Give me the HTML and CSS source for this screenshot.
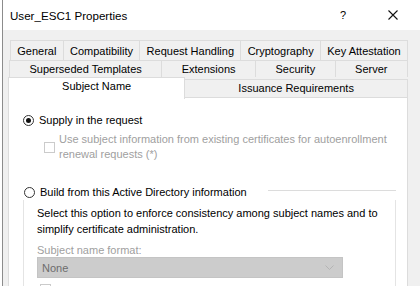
FILE: index.html
```html
<!DOCTYPE html>
<html lang="en">
<head>
    <meta charset="UTF-8">
    <meta name="viewport" content="width=device-width, initial-scale=1.0">
    <title>User_ESC1 Properties</title>
    <link rel="stylesheet" href="styles.css">
</head>
<body>

    <div class="window">
        <div class="titlebar">
            <span class="title">User_ESC1 Properties</span>
            <span class="help">?</span>
            <span class="close">
                <svg width="10" height="10" viewBox="0 0 10 10">
                    <path d="M0.5 0.5 L9.5 9.5 M9.5 0.5 L0.5 9.5" stroke="#111" stroke-width="1.1" fill="none"/>
                </svg>
            </span>
        </div>

        <div class="dialog">
            <!-- tab rows, back to front -->
            <div class="tabs">
                <div class="tab-row row1">
                    <div class="tab">General</div>
                    <div class="tab">Compatibility</div>
                    <div class="tab">Request Handling</div>
                    <div class="tab">Cryptography</div>
                    <div class="tab">Key Attestation</div>
                </div>
                <div class="tab-row row2">
                    <div class="tab">Superseded Templates</div>
                    <div class="tab">Extensions</div>
                    <div class="tab">Security</div>
                    <div class="tab">Server</div>
                </div>
                <div class="tab-row row3">
                    <div class="tab active">Subject Name</div>
                    <div class="tab">Issuance Requirements</div>
                </div>
            </div>

            <div class="panel">
                <div class="option">
                    <span class="radio checked"></span>
                    <span>Supply in the request</span>
                </div>

                <div class="check-line disabled">
                    <span class="checkbox"></span>
                    <span>Use subject information from existing certificates for autoenrollment<br>renewal requests (*)</span>
                </div>

                <div class="group">
                    <div class="group-head">
                        <span class="radio"></span>
                        <span>Build from this Active Directory information</span>
                        <span class="group-rule"></span>
                    </div>
                    <div class="group-body">
                        <p class="note">Select this option to enforce consistency among subject names and to<br>simplify certificate administration.</p>
                        <div class="field-label">Subject name format:</div>
                        <div class="select">
                            <span>None</span>
                            <svg width="9" height="5" viewBox="0 0 9 5">
                                <path d="M0.5 0.5 L4.5 4.5 L8.5 0.5" stroke="#b4b4b4" fill="none"/>
                            </svg>
                        </div>
                        <!-- next option row, only its box shows at the edge -->
                        <span class="checkbox next"></span>
                    </div>
                </div>
            </div>
        </div>
    </div>

</body>
</html>
```

FILE: styles.css
```css
body {
    margin: 0;
    width: 420px;
    height: 286px;
    overflow: hidden;
    background: #fff;
    font-family: "Liberation Sans", Arial, sans-serif;
    font-size: 11px;
    color: #000;
}
.window {
    margin-left: 2px;
    border-left: 1px solid #8c8c8c;
    height: 286px;
}
.titlebar {
    height: 30px;
    display: flex;
    align-items: center;
    background: #fff;
}
.title {
    margin-left: 7px;
    font-size: 11.6px;
    flex: 1;
}
.help {
    font-size: 11px;
    width: 10px;
    margin-right: 38px;
}
.close {
    display: flex;
    margin-right: 22px;
}
.dialog {
    background: #f0f0f0;
    height: 256px;
    padding: 10px 12px 0 5px;
}
.tab-row {
    display: flex;
}
.tab {
    flex: 1 1 auto;
    padding: 0 5px;
    text-align: center;
    border: 1px solid #dcdcdc;
    border-bottom: none;
    margin-left: -1px;
    background: #f0f0f0;
    white-space: nowrap;
}
.tab:first-child {
    margin-left: 0;
}
.row1 {
    margin-left: 2px;
    height: 20px;
    line-height: 20px;
}
.row2 {
    margin-left: 1px;
    height: 17px;
    line-height: 16px;
}
.row3 {
    height: 20px;
    position: relative;
    z-index: 1;
}
.row3 .tab {
    margin-top: 2px;
    line-height: 17px;
}
.row3 .tab.active {
    margin-top: 0;
    height: 21px;
    line-height: 17px;
    background: #fff;
}
.panel {
    background: #fff;
    border: 1px solid #dcdcdc;
    height: 200px;
    padding: 14px 0 0 14px;
}
.option {
    display: flex;
    align-items: center;
    gap: 5px;
    height: 16px;
}
.radio {
    width: 9px;
    height: 9px;
    border: 1px solid #333;
    border-radius: 50%;
    background: #fff;
    display: flex;
    align-items: center;
    justify-content: center;
    flex: none;
}
.radio.checked::after {
    content: "";
    width: 5px;
    height: 5px;
    border-radius: 50%;
    background: #111;
}
.check-line {
    display: flex;
    align-items: center;
    gap: 4px;
    margin: 4px 0 0 21px;
    line-height: 15px;
}
.checkbox {
    width: 9px;
    height: 9px;
    border: 1px solid #cbcbcb;
    background: #fff;
    flex: none;
}
.disabled {
    color: #a0a0a0;
}
.group {
    margin-top: 22px;
    width: 373px;
}
.group-head {
    display: flex;
    align-items: center;
    gap: 5px;
    height: 16px;
    padding-left: 1px;
}
.group-rule {
    flex: 1;
    border-top: 1px solid #dcdcdc;
    margin: -3px 0 0 16px;
}
.group-body {
    border-left: 1px solid #e4e4e4;
    border-right: 1px solid #e4e4e4;
    padding: 5px 0 10px 13px;
    height: 100px;
}
.note {
    margin: 0;
    line-height: 16px;
}
.field-label {
    color: #a0a0a0;
    margin-top: 6px;
    line-height: 14px;
}
.select {
    width: 292px;
    height: 19px;
    background: #cccccc;
    border: 1px solid #c4c4c4;
    display: flex;
    align-items: center;
    justify-content: space-between;
    padding: 0 8px 0 4px;
    color: #6d6d6d;
}
.checkbox.next {
    display: block;
    margin: 6px 0 0 3px;
}
```
